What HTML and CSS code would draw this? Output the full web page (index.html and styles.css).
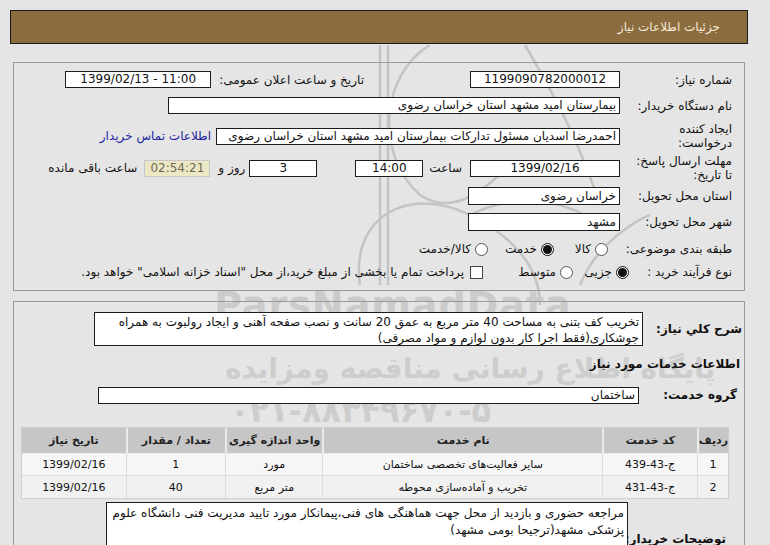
FILE: index.html
```html
<!DOCTYPE html>
<html lang="fa" dir="rtl">
<head>
<meta charset="utf-8">
<title>جزئیات اطلاعات نیاز</title>
<link rel="stylesheet" href="styles.css">
</head>
<body>
<div class="page">
  <div class="titlebar">جزئیات اطلاعات نیاز</div>

  <div class="panel p1">
    <div class="row r1">
      <div class="lbl">شماره نیاز:</div>
      <div class="box w150 c ltr">1199090782000012</div>
      <div class="lbl2 gap1">تاریخ و ساعت اعلان عمومی:</div>
      <div class="box w146 c ltr">1399/02/13 - 11:00</div>
    </div>
    <div class="row r2">
      <div class="lbl">نام دستگاه خریدار:</div>
      <div class="box w452">بیمارستان امید مشهد استان خراسان رضوی</div>
    </div>
    <div class="row r3">
      <div class="lbl two">ایجاد کننده<br>درخواست:</div>
      <div class="box w404">احمدرضا اسدیان مسئول تدارکات بیمارستان امید مشهد استان خراسان رضوی</div>
      <a class="link" href="#">اطلاعات تماس خریدار</a>
    </div>
    <div class="row r4">
      <div class="lbl two">مهلت ارسال پاسخ:<br>تا تاریخ:</div>
      <div class="box w150 c ltr">1399/02/16</div>
      <div class="txt t-saat">ساعت</div>
      <div class="box w68 c ltr">14:00</div>
      <div class="box w68 c days">3</div>
      <div class="txt t-rooz">روز و</div>
      <div class="box w66 c remain ltr">02:54:21</div>
      <div class="txt t-remain">ساعت باقی مانده</div>
    </div>
    <div class="row r5">
      <div class="lbl">استان محل تحویل:</div>
      <div class="box w152 h18">خراسان رضوی</div>
    </div>
    <div class="row r6">
      <div class="lbl">شهر محل تحویل:</div>
      <div class="box w152 h18">مشهد</div>
    </div>
    <div class="row r7">
      <div class="lbl">طبقه بندی موضوعی:</div>
      <div class="og g71"><span class="radio"></span><span class="opt">کالا</span></div>
      <div class="og g72"><span class="radio on"></span><span class="opt">خدمت</span></div>
      <div class="og"><span class="radio"></span><span class="opt">کالا/خدمت</span></div>
    </div>
    <div class="row r8">
      <div class="lbl l8">نوع فرآیند خرید :</div>
      <div class="og g81"><span class="radio on"></span><span class="opt">جزیی</span></div>
      <div class="og g82"><span class="radio"></span><span class="opt">متوسط</span></div>
      <div class="og"><span class="check"></span><span class="opt">پرداخت تمام یا بخشی از مبلغ خرید،از محل "اسناد خزانه اسلامی" خواهد بود.</span></div>
    </div>
  </div>

  <div class="panel p2">
    <div class="drow">
      <div class="blbl dlbl">شرح کلي نياز:</div>
      <div class="box desc">تخریب کف بتنی به مساحت 40 متر مربع به عمق 20 سانت و نصب صفحه آهنی و ایجاد رولبوت به همراه جوشکاری(فقط اجرا کار بدون لوازم و مواد مصرفی)</div>
    </div>
    <div class="btitle">اطلاعات خدمات مورد نیاز</div>
    <div class="grow">
      <div class="blbl">گروه خدمت:</div>
      <div class="box group">ساختمان</div>
    </div>
    <table class="items">
      <thead>
        <tr>
          <th class="c1">ردیف</th>
          <th class="c2">کد خدمت</th>
          <th class="c3">نام خدمت</th>
          <th class="c4">واحد اندازه گیری</th>
          <th class="c5">تعداد / مقدار</th>
          <th class="c6">تاریخ نیاز</th>
        </tr>
      </thead>
      <tbody>
        <tr class="odd">
          <td>1</td><td>ج-43-439</td><td>سایر فعالیت‌های تخصصی ساختمان</td><td>مورد</td><td>1</td><td>1399/02/16</td>
        </tr>
        <tr class="even">
          <td>2</td><td>ج-43-431</td><td>تخریب و آماده‌سازی محوطه</td><td>متر مربع</td><td>40</td><td>1399/02/16</td>
        </tr>
      </tbody>
    </table>
    <div class="nrow">
      <div class="blbl nlbl">توضیحات خریدار:</div>
      <div class="box note">مراجعه حضوری و بازدید از محل جهت هماهنگی های فنی،پیمانکار مورد تایید مدیریت فنی دانشگاه علوم پزشکی مشهد(ترجیحا بومی مشهد)</div>
    </div>
  </div>

  <div class="wm" aria-hidden="true">
    <svg class="wm-logo" width="470" height="260" viewBox="0 0 470 260">
      <g fill="none" stroke="#c4c4c4" stroke-width="2.5">
        <path d="M200 0 L200 240"/>
        <path d="M208 0 L208 240"/>
        <path d="M250 0 C200 30 195 110 240 150 C270 170 300 150 330 120"/>
        <path d="M180 240 C170 170 230 140 290 170 C330 190 360 220 360 260"/>
        <path d="M345 0 C380 60 400 100 420 160"/>
        <path d="M400 240 C420 190 470 170 470 170"/>
        <path d="M290 170 C330 150 380 150 420 180"/>
      </g>
    </svg>
    <div class="wm-en">ParsNamadData</div>
    <div class="wm-fa1">مرکز فرآوری اطلاعات پارس نماد داده ها</div>
    <div class="wm-fa2">پایگاه اطلاع رسانی مناقصه ومزایده</div>
    <div class="wm-fa3">۰۲۱-۸۸۳۴۹۶۷۰-۵</div>
  </div>
</div>
</body>
</html>
```
FILE: styles.css
```css
* { box-sizing: border-box; }
html, body { margin: 0; padding: 0; }
body {
  background: #e5e5e5;
  font-family: "DejaVu Sans", sans-serif;
  font-size: 12px;
  color: #111;
  width: 770px;
  height: 545px;
  overflow: hidden;
}
.page {
  position: relative;
  direction: rtl;
  padding-top: 10px;
}
.titlebar {
  margin: 0 22px 0 10px;
  height: 34px;
  background: #8c6d3f;
  border: 1px solid #1a1a1a;
  color: #f3ead8;
  font-size: 12px;
  line-height: 32px;
  padding-right: 27px;
}
.panel {
  border: 1px solid #9a9a9a;
  margin: 0 25px 0 13px;
  position: relative;
  z-index: 2;
}
.p1 {
  margin-top: 18px;
  height: 229px;
  padding: 8px 12px 0 0;
}
.row {
  display: flex;
  align-items: center;
}
.r1 { height: 17px; margin-bottom: 9px; }
.r2 { height: 17px; margin-bottom: 8px; }
.r3 { height: 28px; margin-bottom: 4px; }
.r4 { height: 28px; margin-bottom: 5px; }
.r5 { height: 18px; margin-bottom: 8px; }
.r6 { height: 18px; margin-bottom: 9px; }
.r7 { height: 18px; margin-bottom: 5px; }
.r8 { height: 18px; }

.lbl {
  width: 112px;
  flex: none;
  white-space: nowrap;
  font-size: 12px;
}
.lbl.two { line-height: 14px; white-space: normal; }
.box {
  background: #fff;
  border: 1px solid #1c1c1c;
  height: 17px;
  line-height: 15px;
  padding: 0 3px;
  white-space: nowrap;
  overflow: hidden;
  flex: none;
  font-size: 12px;
}
.box.c { text-align: center; }
.ltr { direction: ltr; }
.h18 { height: 18px; line-height: 16px; }
.w150 { width: 150px; }
.w146 { width: 146px; }
.w452 { width: 452px; }
.w404 { width: 404px; }
.w152 { width: 152px; }
.w68 { width: 68px; }
.w66 { width: 66px; }
.lbl2 { white-space: nowrap; margin-left: 8px; }
.gap1 { margin-right: 106px; }
.link {
  color: #2323a3;
  text-decoration: none;
  margin-right: 5px;
  white-space: nowrap;
}
.txt { white-space: nowrap; }
.t-saat { margin: 0 8px 0 6px; }
.days { margin-right: 38px; }
.t-rooz { margin: 0 4px 0 8px; }
.remain {
  background: #ece8c6;
  border-color: #c8c8c8;
  color: #6d6a54;
}
.t-remain { margin-right: 7px; }

.og {
  display: flex;
  align-items: center;
  flex: none;
  white-space: nowrap;
}
.g71 { width: 54px; margin-right: 12px; }
.g72 { width: 66px; }
.l8 { width: 103px; }
.g81 { width: 56px; }
.g82 { width: 90px; }
.radio {
  width: 13px;
  height: 13px;
  border-radius: 50%;
  border: 1px solid #555;
  background: #fff;
  flex: none;
  margin-left: 4px;
  position: relative;
}
.radio.on {
  border: 1px solid #111;
}
.radio.on::after {
  content: "";
  position: absolute;
  left: 1px; top: 1px;
  width: 9px; height: 9px;
  border-radius: 50%;
  background: #111;
}
.opt { white-space: nowrap; }
.check {
  width: 13px;
  height: 13px;
  border: 1px solid #444;
  background: #fff;
  flex: none;
  margin-left: 6px;
}

.p2 {
  margin-top: 10px;
  height: 260px;
  padding: 10px 2px 0 0;
}
.blbl {
  font-weight: bold;
  font-size: 12px;
  white-space: nowrap;
  flex: none;
}
.drow { display: flex; align-items: center; }
.dlbl { width: 99px; }
.desc {
  width: 549px;
  height: 34px;
  line-height: 16px;
  white-space: normal;
  padding: 1px 3px;
}
.btitle {
  font-weight: bold;
  margin: 10px 2px 0 0;
  height: 16px;
  line-height: 16px;
}
.grow {
  display: flex;
  align-items: center;
  margin: 14px 5px 0 0;
  height: 18px;
}
.grow .blbl { width: 98px; }
.group { width: 541px; }

.items {
  margin: 23px 13px 0 0;
  width: 708px;
  border-collapse: separate;
  border-spacing: 0;
  border: 1px solid #cfcfcf;
  font-size: 11px;
}
.items th {
  background: #c6c6c6;
  height: 26px;
  font-weight: bold;
  color: #222;
  border-left: 2px solid #ebebeb;
  border-bottom: 1px solid #ebebeb;
  padding: 0;
}
.items th:last-child { border-left: none; }
.items td {
  height: 22px;
  text-align: center;
  border-left: 1px solid #dcdcdc;
  border-bottom: 1px solid #dcdcdc;
  padding: 0;
}
.items td:last-child { border-left: none; }
.items tr:last-child td { border-bottom: none; }
.items tr.odd td { background: #f6f6f6; }
.items tr.even td { background: #f1f1f1; }
.c1 { width: 29px; }
.c2 { width: 95px; }
.c3 { width: 282px; }
.c4 { width: 98px; }
.c5 { width: 100px; }
.c6 { width: 104px; }

.nrow {
  display: flex;
  align-items: flex-start;
  margin: 3px 16px 0 0;
}
.nlbl { margin-top: 29px; width: 98px; line-height: 16px; }
.note {
  width: 522px;
  height: 50px;
  white-space: normal;
  line-height: 17px;
  padding: 2px 3px;
  border-bottom: none;
}

.wm {
  position: absolute;
  left: 0; top: 0;
  width: 770px; height: 545px;
  pointer-events: none;
  z-index: 1;
}
.wm-logo {
  position: absolute;
  left: 180px;
  top: 45px;
}
.wm-en {
  position: absolute;
  left: 214px;
  top: 283px;
  font-family: "DejaVu Sans", sans-serif;
  font-weight: bold;
  font-size: 38px;
  letter-spacing: 1px;
  color: #cbcbcb;
  direction: ltr;
}
.wm-fa1, .wm-fa2, .wm-fa3 {
  position: absolute;
  color: #cdcdcd;
  white-space: nowrap;
  direction: rtl;
}
.wm-fa1 { left: 235px; top: 318px; font-size: 24px; font-style: italic; }
.wm-fa2 { left: 225px; top: 352px; font-size: 28px; font-weight: bold; }
.wm-fa3 { left: 230px; top: 392px; font-size: 32px; font-weight: bold; }
```
